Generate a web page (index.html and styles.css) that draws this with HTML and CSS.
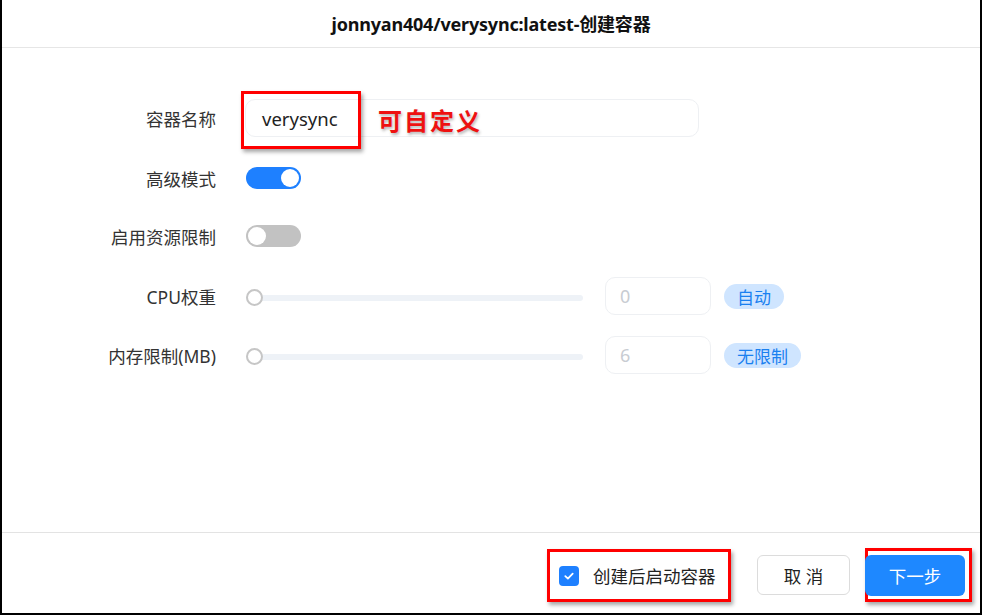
FILE: index.html
```html
<!DOCTYPE html>
<html lang="zh">
<head>
<meta charset="utf-8">
<link rel="stylesheet" href="styles.css">
</head>
<body>
<div class="dialog">
  <div class="header">jonnyan404/verysync:latest-创建容器</div>
  <div class="body">
    <div class="row row-name">
      <div class="label">容器名称</div>
      <div class="ctrl">
        <div class="input name-input"><span>verysync</span></div>
        <div class="mark mark-name"></div>
        <div class="note">可自定义</div>
      </div>
    </div>
    <div class="row row-adv">
      <div class="label">高级模式</div>
      <div class="ctrl"><div class="switch on"><i></i></div></div>
    </div>
    <div class="row row-res">
      <div class="label">启用资源限制</div>
      <div class="ctrl"><div class="switch"><i></i></div></div>
    </div>
    <div class="row row-cpu">
      <div class="label">CPU权重</div>
      <div class="ctrl">
        <div class="slider"><i></i></div>
        <div class="input num">0</div>
        <div class="tag">自动</div>
      </div>
    </div>
    <div class="row row-mem">
      <div class="label">内存限制(MB)</div>
      <div class="ctrl">
        <div class="slider"><i></i></div>
        <div class="input num">6</div>
        <div class="tag">无限制</div>
      </div>
    </div>
  </div>
  <div class="footer">
    <div class="check-wrap">
      <span class="checkbox"><svg width="12" height="12" viewBox="0 0 12 12"><path d="M2.3 6.2 L4.9 8.6 L9.7 3.6" fill="none" stroke="#fff" stroke-width="1.8" stroke-linecap="round" stroke-linejoin="round"/></svg></span>
      <span class="check-text">创建后启动容器</span>
    </div>
    <button class="btn cancel">取 消</button>
    <div class="next-wrap"><button class="btn next">下一步</button></div>
  </div>
</div>
</body>
</html>
```
FILE: styles.css
```css
* { box-sizing: border-box; }
html, body { margin: 0; padding: 0; background: #fff; }
body {
  font-family: "Noto Sans", "Noto Sans CJK SC", sans-serif;
  color: #222;
}
.dialog {
  width: 982px;
  height: 615px;
  border-left: 2px solid #000;
  border-right: 2px solid #000;
  border-bottom: 2px solid #000;
  display: flex;
  flex-direction: column;
  background: #fff;
}
.header {
  height: 48px;
  border-bottom: 1px solid #e6e6e6;
  display: flex;
  align-items: center;
  justify-content: center;
  font-size: 18px;
  font-weight: 700;
  color: #111;
  padding-bottom: 1px;
  letter-spacing: -0.2px;
}
.body {
  flex: 1;
  padding-top: 51px;
  display: flex;
  flex-direction: column;
}
.row {
  display: flex;
  align-items: center;
}
.label {
  width: 214px;
  text-align: right;
  font-size: 17.5px;
  color: #333;
  flex: none;
}
.ctrl {
  margin-left: 29px;
  display: flex;
  align-items: center;
  position: relative;
}
.row-name { height: 38px; }
.row-adv { margin-top: 30px; height: 22px; }
.row-res { margin-top: 36px; height: 22px; }
.row-cpu { margin-top: 30px; height: 38px; }
.row-mem { margin-top: 21px; height: 38px; }

.input {
  border: 1px solid #eef0f3;
  border-radius: 10px;
  height: 38px;
  display: flex;
  align-items: center;
  background: #fff;
}
.name-input {
  width: 454px;
  padding-left: 16px;
  font-size: 18.5px;
  color: #222;
}
.mark-name {
  position: absolute;
  left: -4px;
  top: -8px;
  width: 120px;
  height: 58px;
  border: 3px solid #f00;
  box-shadow: 2px 3px 4px rgba(0,0,0,0.35);
}
.note {
  position: absolute;
  left: 133px;
  top: 3px;
  font-size: 24px;
  font-weight: 700;
  color: #ee1111;
  letter-spacing: 2px;
  text-shadow: 1px 2px 3px rgba(0,0,0,0.3);
}
.switch {
  width: 55px;
  height: 22px;
  border-radius: 11px;
  background: #c2c2c2;
  position: relative;
  margin-left: 1px;
}
.switch i {
  position: absolute;
  top: 2px;
  left: 2px;
  width: 18px;
  height: 18px;
  border-radius: 50%;
  background: #fff;
}
.switch.on { background: #1e80ff; }
.switch.on i { left: auto; right: 2px; }

.slider {
  width: 337px;
  height: 6px;
  background: #eef2f7;
  border-radius: 3px;
  position: relative;
  margin-left: 1px;
  margin-top: 4px;
}
.slider i {
  position: absolute;
  left: 0;
  top: -6px;
  width: 17px;
  height: 17px;
  border-radius: 50%;
  border: 2px solid #c6c6c6;
  background: #fff;
}
.num {
  width: 106px;
  margin-left: 22px;
  padding-left: 14px;
  font-size: 18px;
  color: #c8ccd2;
}
.tag {
  margin-left: 13px;
  height: 25px;
  padding: 0 13px;
  border-radius: 13px;
  background: #cfe5ff;
  color: #1a80f0;
  font-size: 17px;
  display: flex;
  align-items: center;
}

.footer {
  height: 81px;
  border-top: 1px solid #e3e3e3;
  display: flex;
  align-items: center;
  justify-content: flex-end;
  padding-right: 8px;
  padding-top: 4px;
}
.check-wrap {
  width: 184px;
  height: 53px;
  border: 3px solid #f00;
  box-shadow: 2px 3px 4px rgba(0,0,0,0.35);
  display: flex;
  align-items: center;
  padding-left: 9px;
  margin-top: 1px;
}
.checkbox {
  width: 20px;
  height: 20px;
  border-radius: 4px;
  background: #1e80ff;
  display: flex;
  align-items: center;
  justify-content: center;
}
.check-text {
  margin-left: 14px;
  font-size: 17.5px;
  color: #222;
}
.btn {
  font-family: inherit;
  cursor: pointer;
}
.cancel {
  margin-left: 26px;
  width: 93px;
  height: 40px;
  border: 1px solid #dcdcdc;
  border-radius: 6px;
  background: #fff;
  font-size: 17.5px;
  color: #222;
}
.next-wrap {
  margin-left: 15px;
  width: 107px;
  height: 54px;
  border: 3px solid #f00;
  box-shadow: 2px 3px 4px rgba(0,0,0,0.35);
  display: flex;
  align-items: center;
}
.next {
  width: 100px;
  height: 41px;
  border: none;
  border-radius: 6px;
  background: #1e88ff;
  color: #fff;
  font-size: 17.5px;
  margin-left: -3px;
}
```
